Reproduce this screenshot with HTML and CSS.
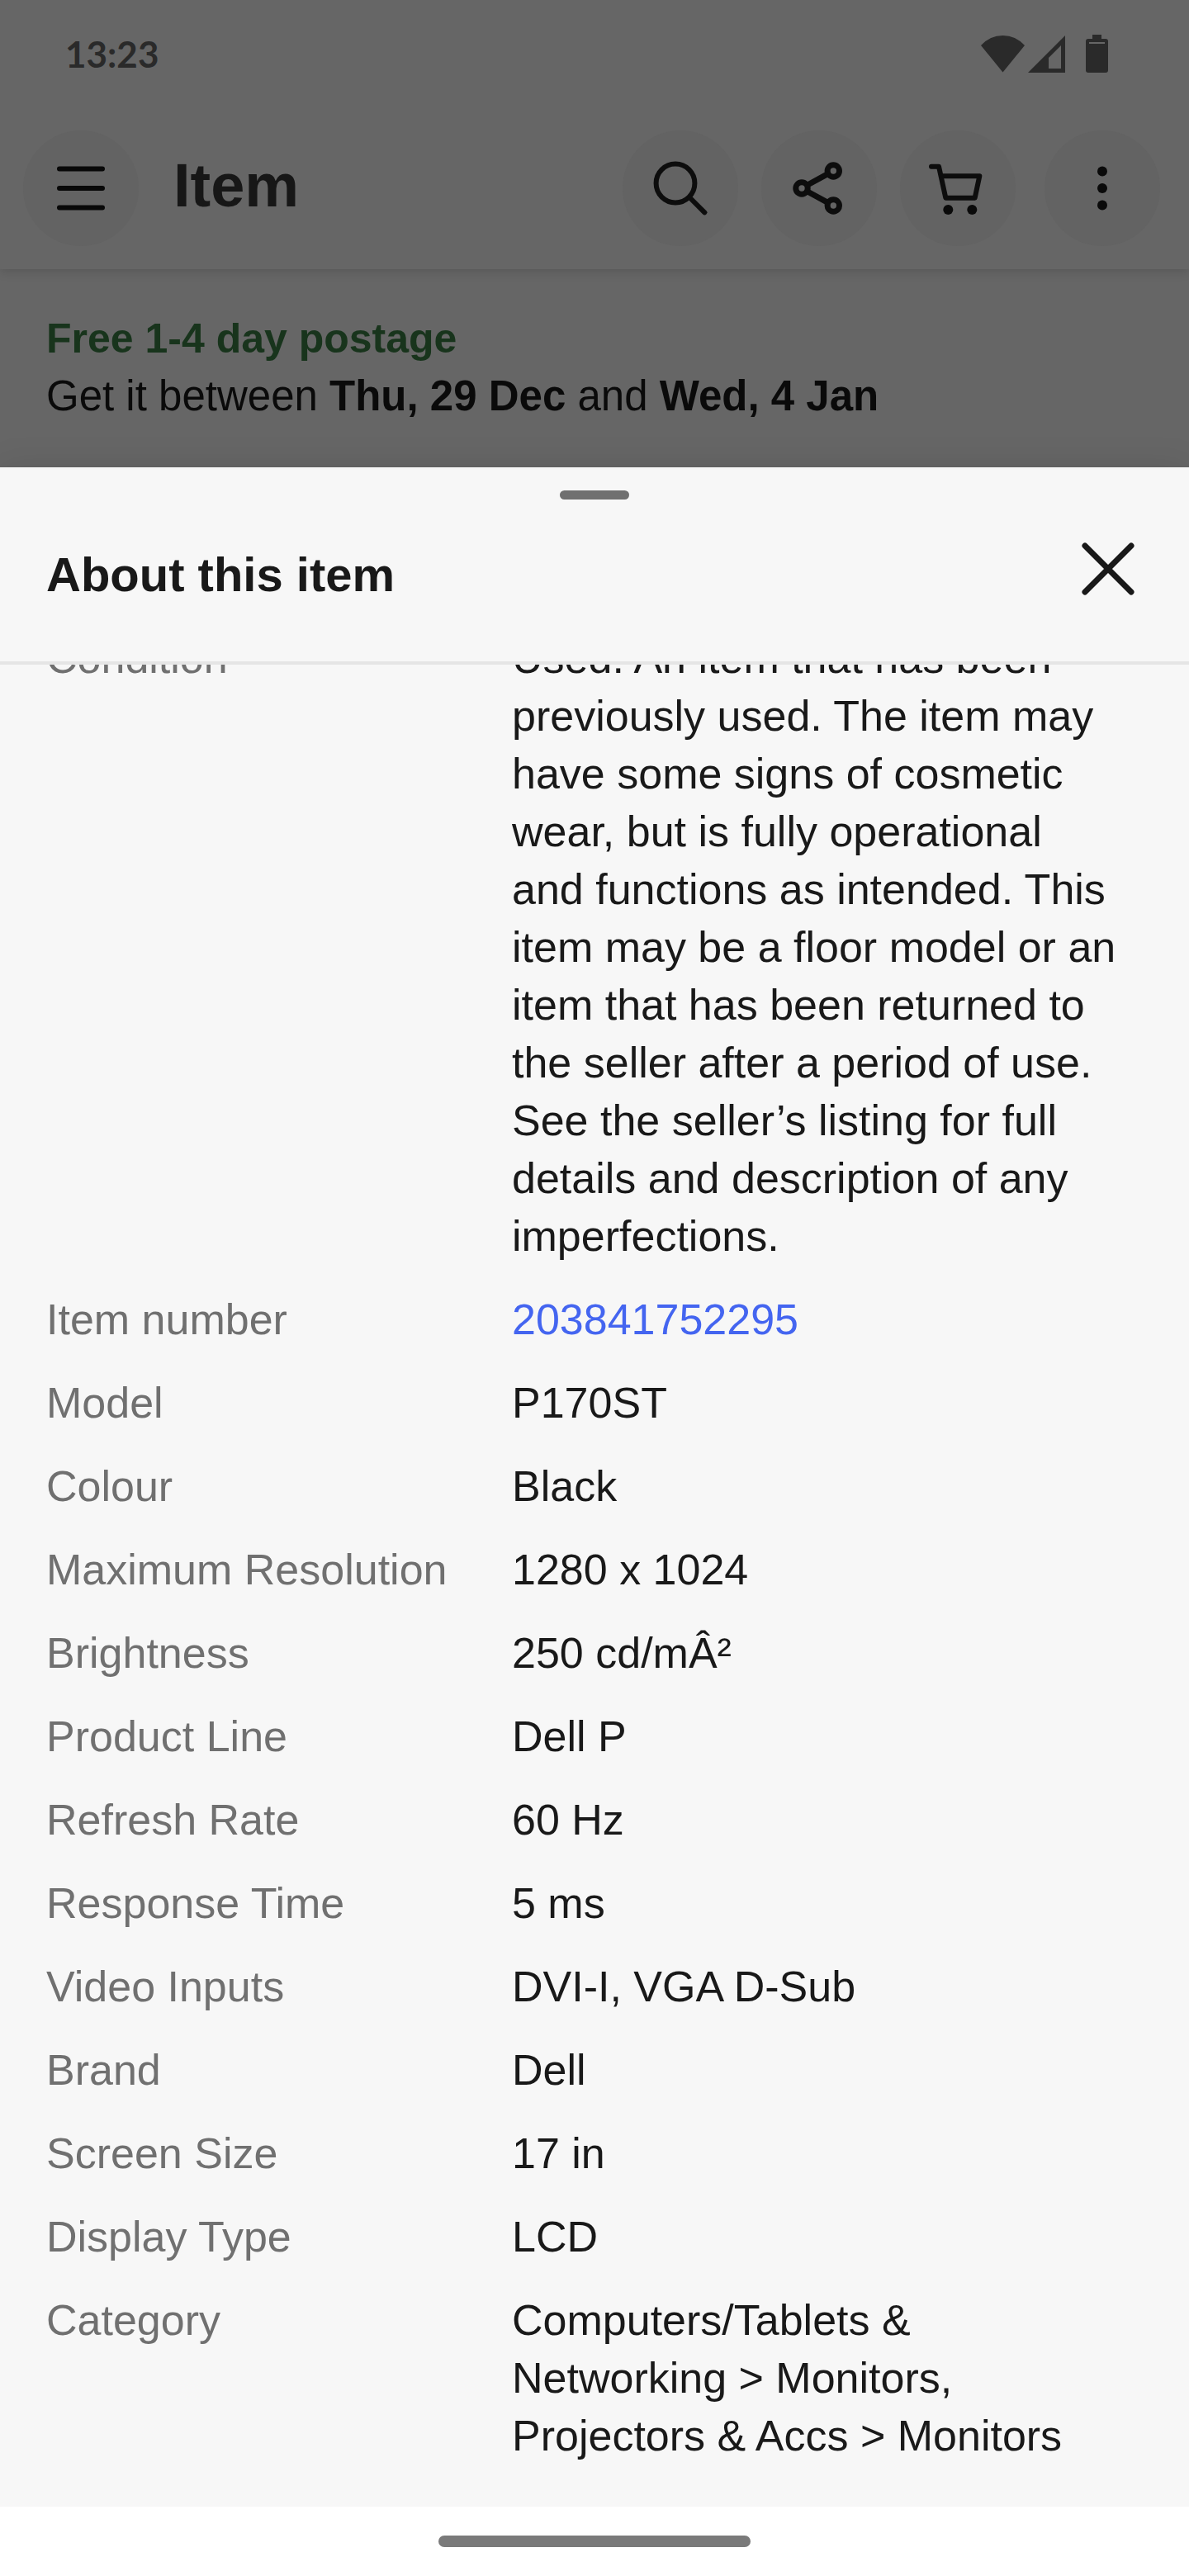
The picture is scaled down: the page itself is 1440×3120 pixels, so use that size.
FILE: index.html
```html
<!DOCTYPE html>
<html lang="en-GB">
<head>
<meta charset="utf-8">
<meta name="viewport" content="width=device-width, initial-scale=1">
<title>About this item</title>
<link rel="stylesheet" href="styles.css">
</head>
<body>
<div class="backdrop">
  <div class="status-bar">
    <time class="clock">13:23</time>
    <div class="status-icons">
      <svg width="54" height="46" viewBox="0 0 54 46" aria-hidden="true"><path d="M0 13Q11 1 26.500 1T53 13L26.500 45.500Z"/></svg>
      <svg width="46" height="46" viewBox="0 0 46 46" aria-hidden="true"><path fill-rule="evenodd" d="M0 46L45 1V46ZM25 28V41H40V13Z"/></svg>
      <svg class="battery" width="28" height="46" viewBox="0 0 28 46" aria-hidden="true"><path fill-rule="evenodd" d="M8 0H19V5H24Q27 5 27 8V43Q27 46 24 46H3Q0 46 0 43V8Q0 5 3 5H8ZM4 9V11H23V9Z"/></svg>
    </div>
  </div>
  <header class="app-bar">
    <button class="round-button" type="button" aria-label="Menu">
      <svg class="icon-menu" viewBox="0 0 140 140" aria-hidden="true"><path d="M44 46.500H96M44 70H96M44 93.500H96"/></svg>
    </button>
    <h1 class="app-title">Item</h1>
    <div class="actions">
      <button class="round-button" type="button" aria-label="Search">
        <svg viewBox="0 0 140 140" aria-hidden="true"><circle cx="64" cy="64" r="23.400"/><path d="M81 81L99.300 99.300"/></svg>
      </button>
      <button class="round-button" type="button" aria-label="Share">
        <svg viewBox="0 0 140 140" aria-hidden="true"><g stroke-width="7"><circle cx="49" cy="70" r="7.200"/><circle cx="87.300" cy="49" r="7.200"/><circle cx="87.300" cy="91" r="7.200"/><path d="M56 66L80.500 52.700M56 74L80.500 87.300"/></g></svg>
      </button>
      <button class="round-button" type="button" aria-label="Basket">
        <svg viewBox="0 0 140 140" aria-hidden="true"><path d="M38 43.700H47L55.300 81.700H90.700L96.300 55.300H50"/><circle class="dot" cx="58.300" cy="96" r="6"/><circle class="dot" cx="87.300" cy="96" r="6"/></svg>
      </button>
    </div>
    <button class="round-button" type="button" aria-label="More options">
      <svg viewBox="0 0 140 140" aria-hidden="true"><circle class="dot" cx="70" cy="49.600" r="6"/><circle class="dot" cx="70" cy="70" r="6"/><circle class="dot" cx="70" cy="90.400" r="6"/></svg>
    </button>
  </header>
  <section class="delivery">
    <p class="postage">Free 1-4 day postage</p>
    <p class="estimate">Get it between <strong>Thu, 29 Dec</strong> and <strong>Wed, 4 Jan</strong></p>
  </section>
</div>
<main class="sheet">
  <header class="sheet-header">
    <div class="grabber"></div>
    <div class="sheet-heading">
      <h2 class="sheet-title">About this item</h2>
      <button class="close" type="button" aria-label="Close">
        <svg viewBox="0 0 84 84" aria-hidden="true"><path d="M14 14L70 70M70 14L14 70"/></svg>
      </button>
    </div>
  </header>
  <div class="sheet-body">
    <dl class="specs">
      <div class="spec"><dt>Condition</dt><dd>Used. An item that has been previously used. The item may have some signs of cosmetic wear, but is fully operational and functions as intended. This item may be a floor model or an item that has been returned to the seller after a period of use. See the seller’s listing for full details and description of any imperfections.</dd></div>
      <div class="spec"><dt>Item number</dt><dd><a href="#">203841752295</a></dd></div>
      <div class="spec"><dt>Model</dt><dd>P170ST</dd></div>
      <div class="spec"><dt>Colour</dt><dd>Black</dd></div>
      <div class="spec"><dt>Maximum Resolution</dt><dd>1280 x 1024</dd></div>
      <div class="spec"><dt>Brightness</dt><dd>250 cd/mÂ²</dd></div>
      <div class="spec"><dt>Product Line</dt><dd>Dell P</dd></div>
      <div class="spec"><dt>Refresh Rate</dt><dd>60 Hz</dd></div>
      <div class="spec"><dt>Response Time</dt><dd>5 ms</dd></div>
      <div class="spec"><dt>Video Inputs</dt><dd>DVI-I, VGA D-Sub</dd></div>
      <div class="spec"><dt>Brand</dt><dd>Dell</dd></div>
      <div class="spec"><dt>Screen Size</dt><dd>17 in</dd></div>
      <div class="spec"><dt>Display Type</dt><dd>LCD</dd></div>
      <div class="spec"><dt>Category</dt><dd>Computers/Tablets &amp; Networking &gt; Monitors, Projectors &amp; Accs &gt; Monitors</dd></div>
    </dl>
  </div>
</main>
<footer class="system-nav"><div class="home-pill"></div></footer>
</body>
</html>
```
FILE: styles.css
```css
* {
  box-sizing: border-box;
}

body {
  margin: 0;
  background: #fff;
  color: #191919;
  font-family: "Liberation Sans", Arial, sans-serif;
  font-size: 52px;
  line-height: 70px;
}

h1, h2, p, dl, dd {
  margin: 0;
}

button {
  padding: 0;
  border: 0;
  background: none;
}

svg {
  display: block;
}

/* Dimmed page behind the sheet */
.backdrop {
  background: #666;
  color: #0a0a0a;
}

.status-bar {
  position: relative;
  z-index: 1;
  display: flex;
  align-items: center;
  justify-content: space-between;
  height: 130px;
  padding: 0 97px 0 79px;
  background: #666;
  color: #2a2a2a;
}

.clock {
  font-family: Lato, sans-serif;
  font-size: 44px;
  font-weight: 700;
}

.status-icons {
  display: flex;
  gap: 3px;
  fill: #2a2a2a;
}

.battery {
  margin-left: 21px;
}

.app-bar {
  position: relative;
  display: flex;
  align-items: center;
  height: 196px;
  padding: 0 35px 0 28px;
  background: #666;
  box-shadow: 0 3px 12px rgba(0, 0, 0, 0.14);
}

.app-title {
  flex: 1;
  padding: 0 0 6px 42px;
  color: #171717;
  font-size: 74px;
  line-height: 84px;
}

.actions {
  display: flex;
  gap: 28px;
  margin-right: 35px;
}

.round-button {
  width: 140px;
  height: 140px;
  border-radius: 50%;
  background: #636363;
}

.round-button svg {
  fill: none;
  stroke: #0d0d0d;
  stroke-width: 6;
  stroke-linecap: round;
  stroke-linejoin: round;
}

.round-button .icon-menu {
  stroke: #080808;
}

.round-button .dot {
  fill: #0a0a0a;
  stroke: none;
}

.delivery {
  padding: 49px 56px 51px;
}

.postage {
  color: #18341c;
  font-size: 50px;
  font-weight: 700;
}

.estimate {
  font-size: 51px;
}

/* Bottom sheet */
.sheet {
  position: relative;
  background: #f7f7f7;
  box-shadow: 0 0 40px rgba(0, 0, 0, 0.1);
}

.sheet-header {
  padding-top: 28px;
  border-bottom: 4px solid #e5e5e5;
}

.grabber {
  width: 84px;
  height: 11px;
  margin: 0 auto;
  border-radius: 6px;
  background: #707070;
}

.sheet-heading {
  display: flex;
  align-items: flex-start;
  justify-content: space-between;
  padding: 42px 56px 70px;
}

.sheet-title {
  padding-top: 14px;
  font-size: 58px;
}

.close {
  width: 84px;
  height: 84px;
}

.close svg {
  fill: none;
  stroke: #191919;
  stroke-width: 7;
  stroke-linecap: round;
}

.sheet-body {
  overflow: hidden;
}

/* The list is scrolled part way under the sheet header */
.specs {
  display: grid;
  gap: 31px;
  margin-top: -43px;
  padding: 0 84px 51px 56px;
}

.spec {
  display: grid;
  grid-template-columns: 564px 1fr;
}

.spec dt {
  color: #707070;
}

.spec a {
  color: #4465f0;
  text-decoration: none;
}

.system-nav {
  position: relative;
  padding: 35px 0;
  background: #fff;
}

.home-pill {
  width: 378px;
  height: 14px;
  margin: 0 auto;
  border-radius: 7px;
  background: #7a7a7a;
}
```
